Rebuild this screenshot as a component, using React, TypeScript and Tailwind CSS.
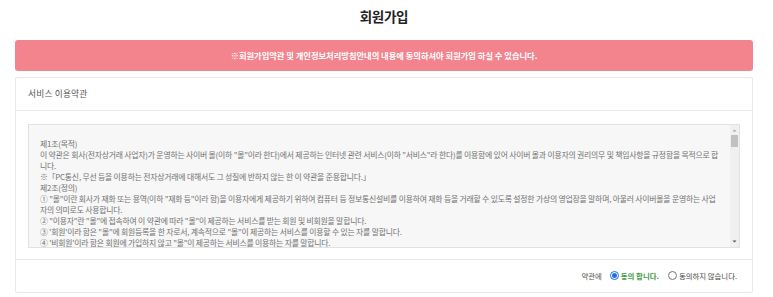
import React from 'react';

const terms = [
  '제1조(목적)',
  '이 약관은 회사(전자상거래 사업자)가 운영하는 사이버 몰(이하 "몰"이라 한다)에서 제공하는 인터넷 관련 서비스(이하 "서비스"라 한다)를 이용함에 있어 사이버 몰과 이용자의 권리의무 및 책임사항을 규정함을 목적으로 합니다.',
  '※「PC통신, 무선 등을 이용하는 전자상거래에 대해서도 그 성질에 반하지 않는 한 이 약관을 준용합니다.」',
  '제2조(정의)',
  '① "몰"이란 회사가 재화 또는 용역(이하 "재화 등"이라 함)을 이용자에게 제공하기 위하여 컴퓨터 등 정보통신설비를 이용하여 재화 등을 거래할 수 있도록 설정한 가상의 영업장을 말하며, 아울러 사이버몰을 운영하는 사업자의 의미로도 사용합니다.',
  '② "이용자"란 "몰"에 접속하여 이 약관에 따라 "몰"이 제공하는 서비스를 받는 회원 및 비회원을 말합니다.',
  '③ \'회원\'이라 함은 "몰"에 회원등록을 한 자로서, 계속적으로 "몰"이 제공하는 서비스를 이용할 수 있는 자를 말합니다.',
  '④ \'비회원\'이라 함은 회원에 가입하지 않고 "몰"이 제공하는 서비스를 이용하는 자를 말합니다.',
];

const App: React.FC = () => {
  return (
    <div className="min-h-[297px] bg-white pl-[15px] pr-[20px] font-['Noto_Sans_CJK_KR',sans-serif]">
      {/* page title */}
      <h1 className="pt-[6px] mb-[14px] text-center text-[13.5px] leading-[20px] font-bold text-[#222] tracking-[-0.3px]">
        회원가입
      </h1>

      {/* notice banner */}
      <div className="flex h-[31px] items-center justify-center rounded-[3px] bg-[#f3848e] text-[8.25px] font-bold text-white">
        ※회원가입약관 및 개인정보처리방침안내의 내용에 동의하셔야 회원가입 하실 수 있습니다.
      </div>

      {/* terms card */}
      <div className="mt-[6px] rounded-[2px] border border-[#e6eaeb]">
        <div className="flex h-[33px] items-center border-b border-[#e6eaeb] px-[12px] text-[8.7px] text-[#555] tracking-[0.2px]">
          서비스 이용약관
        </div>

        <div className="px-[12px] pt-[13px] pb-[11px]">
          <div className="flex h-[124px] border border-[#e2e2e2] bg-[#f7f7f7]">
            <div className="flex-1 overflow-hidden break-all pl-[11px] pr-[11px] pt-[13px] text-[7.85px] leading-[11px] text-[#707070] tracking-[-0.2px]">
              {terms.map((line, i) => (
                <p key={i}>{line}</p>
              ))}
            </div>
            {/* scrollbar */}
            <div className="flex w-[9px] flex-col items-center bg-[#f0f0f0]">
              <svg width="9" height="9" viewBox="0 0 9 9" className="mt-[1px]">
                <path d="M2.5 5.5 L4.5 3.5 L6.5 5.5 Z" fill="#a3a3a3" />
              </svg>
              <div className="h-[12px] w-[7px] bg-[#c1c1c1]" />
              <div className="flex-1" />
              <svg width="9" height="9" viewBox="0 0 9 9" className="mb-[1px]">
                <path d="M2.5 3.5 L6.5 3.5 L4.5 5.5 Z" fill="#505050" />
              </svg>
            </div>
          </div>
        </div>

        <div className="flex h-[33px] items-center justify-end border-t border-[#e6eaeb] pr-[15px] text-[7.4px] text-[#555]">
          <span className="mr-[8px]">약관에</span>
          <label className="mr-[9px] flex items-center">
            <span className="mr-[2px] flex h-[9px] w-[9px] items-center justify-center rounded-full border border-[#1a73e8] bg-white">
              <span className="h-[5px] w-[5px] rounded-full bg-[#1a73e8]" />
            </span>
            <span className="font-bold text-[#3c9a3c]">동의 합니다.</span>
          </label>
          <label className="flex items-center">
            <span className="mr-[2px] h-[9px] w-[9px] rounded-full border border-[#767676] bg-white" />
            <span className="text-[#444]">동의하지 않습니다.</span>
          </label>
        </div>
      </div>
    </div>
  );
};

export default App;
